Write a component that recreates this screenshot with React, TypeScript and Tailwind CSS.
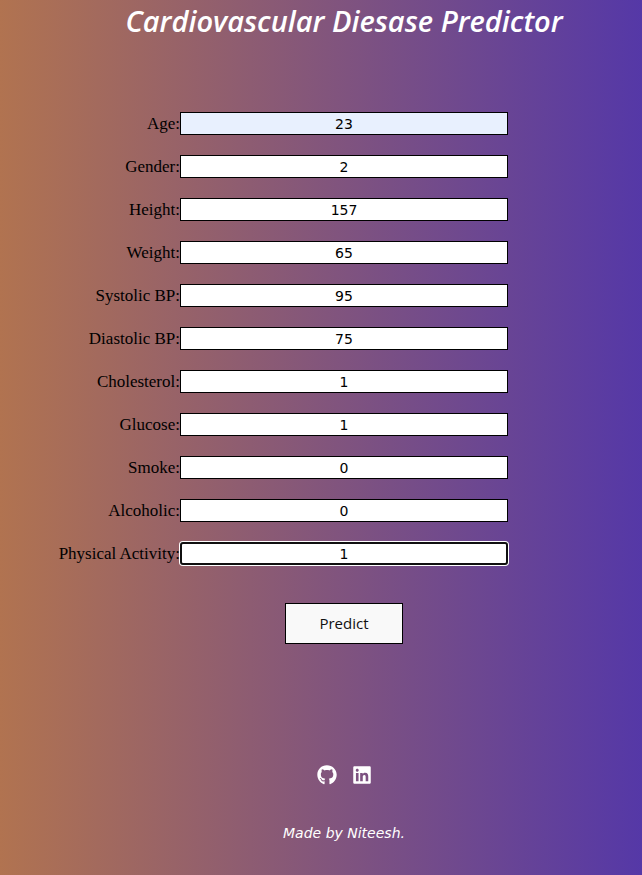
import { FaGithub, FaLinkedin } from "react-icons/fa";

const fields = [
  { id: "age", label: "Age", value: "23", look: "border border-black bg-[#e8f0fe]" },
  { id: "gender", label: "Gender", value: "2" },
  { id: "height", label: "Height", value: "157" },
  { id: "weight", label: "Weight", value: "65" },
  { id: "systolic", label: "Systolic BP", value: "95" },
  { id: "diastolic", label: "Diastolic BP", value: "75" },
  { id: "cholesterol", label: "Cholesterol", value: "1" },
  { id: "glucose", label: "Glucose", value: "1" },
  { id: "smoke", label: "Smoke", value: "0" },
  { id: "alcoholic", label: "Alcoholic", value: "0" },
  {
    id: "activity",
    label: "Physical Activity",
    value: "1",
    look: "bg-white rounded-[3px] border-2 border-[#101010] ring-1 ring-white",
  },
];

export default function App() {
  return (
    <div className="min-h-screen bg-[linear-gradient(to_right,#b17350,#5538a7)] font-['Liberation_Serif',serif] text-black">
      <h1 className="pt-[3px] pl-[46px] text-center font-['Comic_Sans_MS','Open_Sans',sans-serif] text-[29px] leading-9 font-semibold whitespace-nowrap text-white italic">
        Cardiovascular Diesase Predictor
      </h1>

      <form className="pt-[73px]" onSubmit={(e) => e.preventDefault()}>
        <div className="flex flex-col gap-5 pr-[134px]">
          {fields.map((f) => (
            <div key={f.id} className="grid grid-cols-[180px_1fr] items-center">
              <label htmlFor={f.id} className="text-right text-[17px] leading-[23px]">
                {f.label}:
              </label>
              <input
                id={f.id}
                type="text"
                defaultValue={f.value}
                className={`h-[23px] w-full min-w-0 text-center font-['DejaVu_Sans',sans-serif] text-[14px] outline-none ${
                  f.look ?? "border border-black bg-white"
                }`}
              />
            </div>
          ))}
        </div>
        <div className="flex justify-center pt-[38px] pl-[46px]">
          <button
            type="submit"
            className="h-[41px] w-[118px] border border-black bg-[#f9f9f9] font-['Open_Sans',sans-serif] text-[15px] text-[#111111]"
          >
            Predict
          </button>
        </div>
      </form>

      <footer className="flex flex-col items-center pt-[121px] pl-[46px] text-white">
        <div className="flex gap-4">
          <a href="#github" aria-label="GitHub">
            <FaGithub className="h-5 w-5" />
          </a>
          <a href="#linkedin" aria-label="LinkedIn">
            <FaLinkedin className="h-5 w-[18px]" />
          </a>
        </div>
        <p className="pt-[38px] font-['DejaVu_Sans',sans-serif] text-[14px] leading-5 text-white italic">
          Made by Niteesh.
        </p>
      </footer>
    </div>
  );
}
